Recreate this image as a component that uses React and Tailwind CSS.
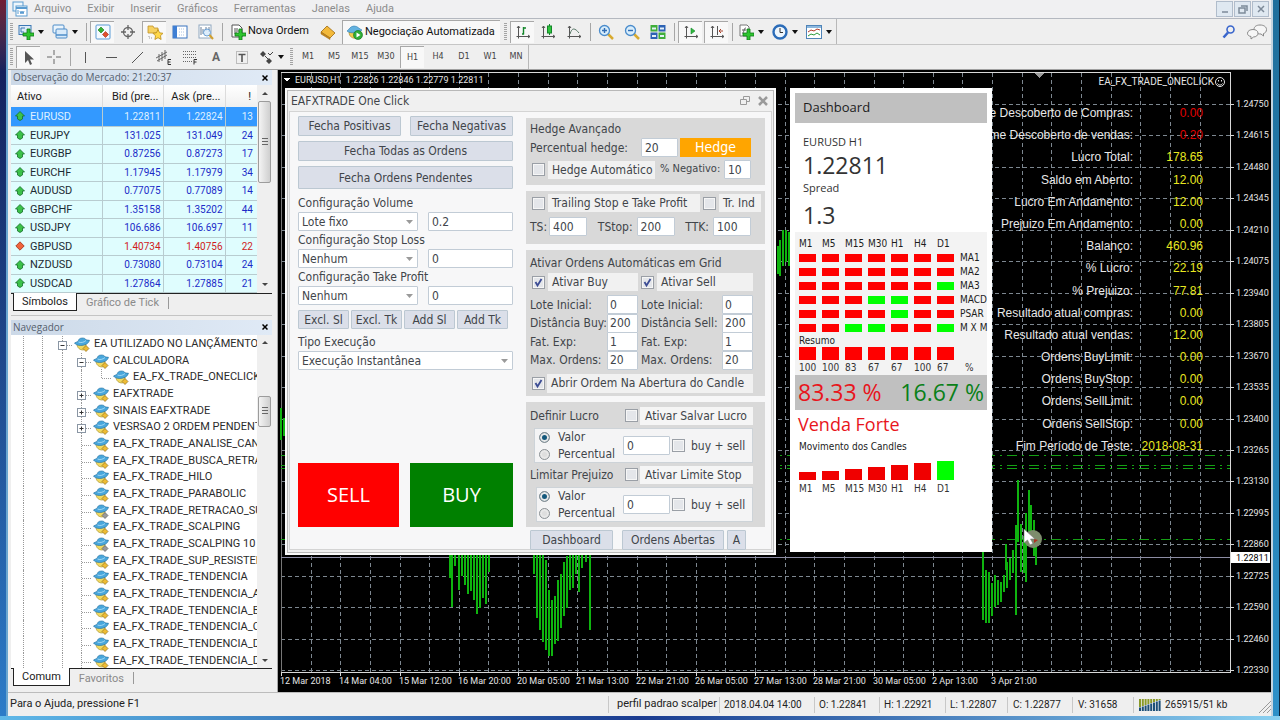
import React from 'react';
import clsx from 'clsx';

const menus = ['Arquivo', 'Exibir', 'Inserir', 'Gráficos', 'Ferramentas', 'Janelas', 'Ajuda'];
const timeframes = ['M1', 'M5', 'M15', 'M30', 'H1', 'H4', 'D1', 'W1', 'MN'];

const quotes = [
  { symbol: 'EURUSD', bid: '1.22811', ask: '1.22824', spread: 13, up: true },
  { symbol: 'EURJPY', bid: '131.025', ask: '131.049', spread: 24, up: true },
  { symbol: 'EURGBP', bid: '0.87256', ask: '0.87273', spread: 17, up: true },
  { symbol: 'EURCHF', bid: '1.17945', ask: '1.17979', spread: 34, up: true },
  { symbol: 'AUDUSD', bid: '0.77075', ask: '0.77089', spread: 14, up: true },
  { symbol: 'GBPCHF', bid: '1.35158', ask: '1.35202', spread: 44, up: true },
  { symbol: 'USDJPY', bid: '106.686', ask: '106.697', spread: 11, up: true },
  { symbol: 'GBPUSD', bid: '1.40734', ask: '1.40756', spread: 22, up: false },
  { symbol: 'NZDUSD', bid: '0.73080', ask: '0.73104', spread: 24, up: true },
  { symbol: 'USDCAD', bid: '1.27864', ask: '1.27885', spread: 21, up: true },
];

const tree = [
  { name: 'EA UTILIZADO NO LANÇÃMENTO', depth: 2, box: '-' },
  { name: 'CALCULADORA', depth: 3, box: '-' },
  { name: 'EA_FX_TRADE_ONECLICK', depth: 4 },
  { name: 'EAFXTRADE', depth: 3, box: '+' },
  { name: 'SINAIS EAFXTRADE', depth: 3, box: '+' },
  { name: 'VESRSAO 2 ORDEM PENDENT', depth: 3, box: '+' },
  { name: 'EA_FX_TRADE_ANALISE_CAN', depth: 3 },
  { name: 'EA_FX_TRADE_BUSCA_RETRA', depth: 3 },
  { name: 'EA_FX_TRADE_HILO', depth: 3 },
  { name: 'EA_FX_TRADE_PARABOLIC', depth: 3 },
  { name: 'EA_FX_TRADE_RETRACAO_SU', depth: 3, gray: true },
  { name: 'EA_FX_TRADE_SCALPING', depth: 3 },
  { name: 'EA_FX_TRADE_SCALPING 10 1', depth: 3, gray: true },
  { name: 'EA_FX_TRADE_SUP_RESISTEN', depth: 3 },
  { name: 'EA_FX_TRADE_TENDENCIA', depth: 3 },
  { name: 'EA_FX_TRADE_TENDENCIA_A', depth: 3 },
  { name: 'EA_FX_TRADE_TENDENCIA_B', depth: 3 },
  { name: 'EA_FX_TRADE_TENDENCIA_C', depth: 3 },
  { name: 'EA_FX_TRADE_TENDENCIA_D', depth: 3 },
  { name: 'EA_FX_TRADE_TENDENCIA_D', depth: 3 },
];

const stats = [
  ['Volume Descoberto de Compras:', '0.00', 'red'],
  ['Volume Descoberto de vendas:', '0.20', 'red'],
  ['Lucro Total:', '178.65'],
  ['Saldo em Aberto:', '12.00'],
  ['Lucro Em Andamento:', '12.00'],
  ['Prejuizo Em Andamento:', '0.00'],
  ['Balanço:', '460.96'],
  ['% Lucro:', '22.19'],
  ['% Prejuizo:', '77.81'],
  ['Resultado atual compras:', '0.00'],
  ['Resultado atual vendas:', '12.00'],
  ['Ordens BuyLimit:', '0.00'],
  ['Ordens BuyStop:', '0.00'],
  ['Ordens SellLimit:', '0.00'],
  ['Ordens SellStop:', '0.00'],
  ['Fim Período de Teste:', '2018-08-31'],
];

const prices = ['1.24750', '1.24615', '1.24480', '1.24345', '1.24210', '1.24075', '1.23940', '1.23805', '1.23670', '1.23535', '1.23400', '1.23265', '1.23130', '1.22995', '1.22860', '1.22725', '1.22590', '1.22460', '1.22330'];
const dates = ['12 Mar 2018', '14 Mar 04:00', '15 Mar 12:00', '16 Mar 20:00', '20 Mar 05:00', '21 Mar 13:00', '22 Mar 21:00', '26 Mar 05:00', '27 Mar 13:00', '28 Mar 21:00', '30 Mar 05:00', '2 Apr 13:00', '3 Apr 21:00'];

// [x, high, low]
const bars = [
  [281, 408, 440], [284, 418, 436],
  [450, 540, 578], [452, 540, 607], [455, 540, 566], [459, 540, 590], [462, 540, 576], [465, 540, 585], [468, 540, 594], [471, 540, 591], [474, 545, 600], [477, 548, 614], [480, 550, 608], [483, 545, 598], [486, 545, 604], [489, 545, 572],
  [534, 540, 574], [537, 540, 618], [540, 540, 630], [543, 550, 642], [546, 560, 650], [549, 590, 656], [552, 600, 656], [555, 596, 644], [558, 580, 641], [561, 574, 628], [564, 562, 616], [567, 556, 608], [570, 550, 590], [573, 550, 588], [576, 550, 574], [579, 550, 592], [582, 540, 568], [586, 540, 562], [590, 540, 630],
  [778, 246, 274], [780, 240, 276], [783, 230, 266], [786, 230, 262], [789, 232, 266],
  [983, 540, 620], [986, 570, 623], [989, 572, 623], [992, 583, 616], [995, 575, 607], [998, 580, 605], [1001, 582, 602], [1004, 575, 592], [1007, 562, 588], [1010, 558, 580], [1013, 550, 573], [1016, 554, 578],
  [1018, 480, 542], [1021, 524, 572], [1024, 536, 573], [1026, 513, 582], [1029, 490, 540], [1031, 505, 534], [1034, 520, 556], [1036, 545, 565],
  [1016, 525, 615], [1006, 544, 570],
];

const signals = [
  ['MA1', 'rrrrrrr'],
  ['MA2', 'rrrrrrr'],
  ['MA3', 'rrrrrrg'],
  ['MACD', 'rrrggrr'],
  ['PSAR', 'rrrrgrr'],
  ['M X M', 'rrggrrg'],
];
const dashFrames = ['M1', 'M5', 'M15', 'M30', 'H1', 'H4', 'D1'];
const summary = [100, 100, 83, 67, 67, 100, 67];
const movement = [8, 9, 11, 13, 15, 17, 19];

/* ---------- icons ---------- */

function Icon({ children, className }) {
  return <svg viewBox="0 0 16 16" className={clsx('w-4 h-4 shrink-0', className)} fill="none">{children}</svg>;
}

const Plus = () => <path d="M9 5h3v4h4v3h-4v4h-3v-4h-4v-3h4z" fill="#2fc52f" stroke="#0d7a17" strokeWidth=".8" />;

const AppIcon = () => (
  <Icon>
    <rect x="1" y="1" width="10" height="9" fill="#eef6fc" stroke="#5a9bd0" />
    <rect x="4" y="5" width="11" height="10" fill="#fff" stroke="#5a9bd0" />
    <path d="M4 7h11" stroke="#5a9bd0" strokeWidth="2" />
    <path d="M6 9v4m2-3 1 3 1-3 1 3 1-3" stroke="#5a9bd0" />
  </Icon>
);
const NewChartIcon = () => (
  <Icon>
    <rect x="1" y="1.5" width="12" height="9" fill="#dcebf8" stroke="#3c78b4" />
    <path d="M3 4h4M3 8h3M3 4v4" stroke="#3c78b4" />
    <Plus />
  </Icon>
);
const ProfilesIcon = () => (
  <Icon>
    <rect x="1" y="1" width="11" height="8" rx="1" fill="#eaf4fc" stroke="#4d8cc8" />
    <rect x="4" y="5" width="11" height="9" rx="1" fill="#d8eafa" stroke="#4d8cc8" />
    <path d="M4 11h11" stroke="#4d8cc8" strokeWidth="1.5" />
  </Icon>
);
const WatchIcon = () => (
  <Icon>
    <rect x="1" y="1" width="14" height="14" rx="1" fill="#f4faff" stroke="#5b9bd5" />
    <path d="M6 3l3 3-3 3-3-3z" fill="#35b135" stroke="#157a15" strokeWidth=".6" />
    <path d="M10.500 7.500l3 3-3 3-3-3z" fill="#e0502c" stroke="#a02a12" strokeWidth=".6" />
  </Icon>
);
const CrosshairIcon = () => (
  <Icon>
    <circle cx="8" cy="8" r="4.5" stroke="#666" strokeWidth="1.3" />
    <path d="M8 1v5M8 10v5M1 8h5M10 8h5" stroke="#666" strokeWidth="1.3" />
  </Icon>
);
const NavigatorIcon = () => (
  <Icon>
    <path d="M1 2h5l1 2h4v5H1z" fill="#f6d160" stroke="#c0922a" strokeWidth=".8" />
    <path d="M2 12v2h3" stroke="#999" strokeDasharray="1 1" />
    <path d="M11 5.500l1.600 3.300 3.400.500-2.500 2.500.6 3.700-3.100-1.800-3.100 1.800.6-3.700L6 9.300l3.400-.5z" fill="#ffd84a" stroke="#b98a1a" strokeWidth=".8" />
  </Icon>
);
const TerminalIcon = () => (
  <Icon>
    <rect x="1" y="2" width="14" height="12" fill="#fff" stroke="#3a74c0" />
    <rect x="1" y="2" width="4" height="12" fill="#3f7fd4" />
    <path d="M7 5h6M7 8h6M7 11h6" stroke="#a9c3e4" strokeDasharray="1 1" />
  </Icon>
);
const TesterIcon = () => (
  <Icon>
    <rect x="1" y="1" width="12" height="13" fill="#fff" stroke="#90a8c0" />
    <path d="M3 3v8M5 5v5M8 3v4M11 3v5" stroke="#6a7f96" />
    <circle cx="9" cy="8.500" r="3.500" fill="#d4e9fa" fillOpacity=".8" stroke="#6aa0d4" />
    <path d="M11.500 11l3.500 4" stroke="#d0a030" strokeWidth="2" />
  </Icon>
);
const NewOrderIcon = () => (
  <Icon>
    <path d="M2 1h7l3 3v9H2z" fill="#fff" stroke="#555" />
    <path d="M4 5h4M4 7h5M4 9h3" stroke="#555" />
    <Plus />
  </Icon>
);
const GoldIcon = () => (
  <Icon>
    <path d="M1 8l6-6 8 7-5 5z" fill="#f3b93a" stroke="#9c6a12" strokeWidth=".8" />
    <path d="M1 8l9 6v1.500L1 10z" fill="#c98716" stroke="#9c6a12" strokeWidth=".5" />
  </Icon>
);
const AutoTradeIcon = () => (
  <Icon>
    <path d="M2 8c0 5 4 7 8 6l3-6z" fill="#f0cc4c" stroke="#a58420" strokeWidth=".6" />
    <path d="M0 7c2-1 3-5 7-5s5 3 8 4c-3 3-12 4-15 1z" fill="#63b2e0" stroke="#2e7cae" strokeWidth=".6" />
    <circle cx="11" cy="11" r="4.500" fill="#2fae35" stroke="#0f7018" strokeWidth=".6" />
    <path d="M9.500 8.500v5l4-2.500z" fill="#fff" />
  </Icon>
);
const Axes = () => <path d="M3.500 2v12.500M1.500 12.500H15M2 4l1.500-2L5 4M13 11l2 1.500-2 1.500" stroke="#555" />;
const BarsIcon = () => <Icon><Axes /><path d="M7 10h2M8.500 3v7.500M8 4h3" stroke="#13862a" strokeWidth="1.400" /></Icon>;
const CandleIcon = () => <Icon><Axes /><path d="M9.500 0v11" stroke="#13862a" /><rect x="7.500" y="2" width="4" height="7" fill="#2fc43c" stroke="#13862a" /></Icon>;
const LineIcon = () => <Icon><Axes /><path d="M4 10c2-7 5-6 9-1" stroke="#5c7a6a" /></Icon>;
const ZoomIcon = ({ plus }) => (
  <Icon>
    <path d="M10 10l5 5" stroke="#d8aa30" strokeWidth="2.500" />
    <circle cx="6.500" cy="6.500" r="5" fill="#d8edfb" stroke="#4a8ccc" strokeWidth="1.300" />
    <path d={plus ? 'M4 6.500h5M6.500 4v5' : 'M4 6.500h5'} stroke="#2f6cb4" strokeWidth="1.400" />
  </Icon>
);
const TileIcon = () => (
  <Icon>
    <rect x=".5" y="1" width="7" height="6.500" fill="#3fae3a" />
    <rect x="8.500" y="1" width="7" height="6.500" fill="#2c62b4" />
    <rect x=".5" y="8.500" width="7" height="6.500" fill="#2c62b4" />
    <rect x="8.500" y="8.500" width="7" height="6.500" fill="#3fae3a" />
    <path d="M2 4.500h4M10 4.500h4M2 12h4M10 12h4" stroke="#e4f0f8" strokeWidth="2" />
  </Icon>
);
const ScrollIcon = () => <Icon><Axes /><path d="M8 4v6l4-3z" fill="#2fb83c" stroke="#13862a" strokeWidth=".6" /></Icon>;
const ShiftIcon = () => <Icon><Axes /><path d="M8.500 2v9" stroke="#555" /><path d="M14 7h-4m2-2-2 2 2 2" stroke="#a8402a" /></Icon>;
const IndicatorsIcon = () => (
  <Icon>
    <path d="M2 1h7l2 2v9H2z" fill="#fff" stroke="#777" />
    <path d="M4 9c2 1 2-6 4-5M4 6h4" stroke="#555" />
    <Plus />
  </Icon>
);
const ClockIcon = () => (
  <Icon>
    <circle cx="8" cy="8" r="6.500" fill="#eef6fd" stroke="#2b6cb8" strokeWidth="2.400" />
    <path d="M8 4v4.500h3" stroke="#333" />
  </Icon>
);
const TemplateIcon = () => (
  <Icon>
    <rect x=".5" y="1.500" width="15" height="13" fill="#fff" stroke="#4f84b8" />
    <path d="M1 3h14" stroke="#8db8de" strokeWidth="2" />
    <path d="M2 8l3-2 3 1 3-2 3 1" stroke="#b03a2a" />
    <path d="M2 12l3-2 3 1 3-2 3 2" stroke="#2a9a3a" />
  </Icon>
);
const SearchIcon = () => (
  <Icon>
    <circle cx="9.500" cy="5.500" r="3.500" stroke="#3a66cc" strokeWidth="1.600" />
    <path d="M7 8.500L2.500 13.500" stroke="#3a66cc" strokeWidth="2.600" />
  </Icon>
);
const ChatIcon = () => (
  <svg viewBox="0 0 20 16" className="w-5 h-4" fill="#f6f6f6" stroke="#888">
    <path d="M13 1c4 0 6.500 2 6.500 4.500S18 9 16.500 9.500V12L14 10c-4 0-7-1.500-7-4.500S9.500 1 13 1z" />
    <path d="M6 5.500c3 0 5 1.500 5 3.700S9 13 6.500 13L4 15v-2.500C1.500 12 .5 11 .5 9.200c0-2.200 2.500-3.700 5.500-3.700z" />
  </svg>
);

const CursorIcon = () => <Icon><path d="M4 1v12l3-3 2 5 2-1-2-4.500h4z" fill="#555" /></Icon>;
const CrossIcon = () => <Icon><path d="M8 1v5M8 10v5M1 8h5M10 8h5" stroke="#666" /></Icon>;
const VLineIcon = () => <Icon><path d="M7.500 3v11" stroke="#555" /></Icon>;
const HLineIcon = () => <Icon><path d="M2 8.500h11" stroke="#555" /></Icon>;
const TrendIcon = () => <Icon><path d="M2 14L13 3" stroke="#555" /></Icon>;
const ChannelIcon = () => (
  <Icon>
    <path d="M0 9L11 3M1 12l10-6M3 5v8M6 3v9M9 1v9" stroke="#666" />
    <path d="M15 10.500h-3v5h3M12 13h2.500" stroke="#333" />
  </Icon>
);
const FiboIcon = () => (
  <Icon>
    <path d="M1 2.500h13M1 5.500h13M1 8.500h13M1 12.500h9" stroke="#666" strokeDasharray="1 1" />
    <path d="M15 10.500h-3v5M12 13h2.500" stroke="#333" />
  </Icon>
);
const LabelIcon = () => (
  <Icon>
    <rect x="2.500" y="2.500" width="11" height="12" stroke="#888" strokeDasharray="1 1" />
    <path d="M4.500 5.500h7M8 5v8" stroke="#555" strokeWidth="1.600" />
  </Icon>
);
const ArrowsIcon = () => (
  <Icon>
    <path d="M5 2l3 3-3 3-3-3z M11 9l3 3-3 3-3-3z" fill="#444" />
    <path d="M7 7l3 3M10 4l2 2 3-3" stroke="#444" />
  </Icon>
);

function QuoteArrow({ up }) {
  return up ? (
    <svg viewBox="0 0 10 10" className="w-[10px] h-[10px] shrink-0"><path d="M5 .5L9.500 5H7.500v3L5 9.500 2.500 8V5H.5z" fill="#3cc24a" stroke="#14702a" strokeWidth=".8" /></svg>
  ) : (
    <svg viewBox="0 0 10 10" className="w-[10px] h-[10px] shrink-0"><path d="M5 .8L9.200 5 5 9.200.8 5z" fill="#f0643c" stroke="#9c2c14" strokeWidth=".8" /></svg>
  );
}

function ExpertIcon({ gray }) {
  return (
    <svg viewBox="0 0 16 15" className="w-4 h-[15px] shrink-0">
      <path d="M3 7c0 4 3 6 6 6 2 0 3-3 3-6z" fill="#f0d860" stroke="#a08c28" strokeWidth=".6" />
      <path d="M.5 6c1-.8 2.500-1 3.500-1.500C4.500 2 6 1 8.500 1c2 0 3 .8 3.500 1.800 1.200.4 2.500.2 3.500.5-1 3.700-5 5.200-9 5.200C3.500 8.500 1.500 7.500.5 6z" fill="#49a7dc" stroke="#1f6c9c" strokeWidth=".6" />
      <path d="M4.500 5c2 1 5.500.5 7.500-1.500" stroke="#b8e2f8" strokeWidth=".8" fill="none" />
      <path d="M12 8.500l3 3-3 3-3-3z" fill={gray ? '#9a9a9a' : '#eebc34'} stroke={gray ? '#5c5c5c' : '#94701a'} strokeWidth=".7" />
    </svg>
  );
}

/* ---------- toolbar pieces ---------- */

function Caret() {
  return <svg viewBox="0 0 6 4" className="w-[6px] h-1 shrink-0"><path d="M0 0h6L3 4z" fill="#111" /></svg>;
}

function ToolButton({ label, pressed, children }) {
  return (
    <button
      aria-label={label}
      className={clsx('w-6 h-[22px] shrink-0 flex items-center justify-center', pressed && 'bg-[#f8f8f8] border-t border-l border-[#a8a8a8]')}
    >
      {children}
    </button>
  );
}

function ToolMenu({ label, className, children }) {
  return (
    <button aria-label={label} className={clsx('h-[22px] shrink-0 flex items-center gap-1 pl-[2px]', className)}>
      {children}
      <Caret />
    </button>
  );
}

const Handle = () => (
  <div className="w-[6px] flex justify-center shrink-0"><div className="w-[3px] h-[18px] bg-[repeating-linear-gradient(to_bottom,#a4a4a4_0_1px,#efefef_1px_2px)]" /></div>
);
const Separator = () => (
  <div className="w-1 flex justify-center shrink-0"><div className="w-px h-[18px] bg-[#a6a6a6]" /></div>
);

function TopBars() {
  return (
    <header className="shrink-0 bg-[#efefef] text-[11px] text-[#111]">
      <nav className="flex items-center h-[19px] pl-1 border-b border-[#b4b8c0] bg-[#f0f0f2]">
        <AppIcon />
        <ul className="flex gap-4 pl-[6px] text-[#8c8c8c]">
          {menus.map((m) => <li key={m}><a href="#">{m}</a></li>)}
        </ul>
        <div className="ml-auto flex gap-px pr-[2px]">
          {['M4 10h6', 'M5 4h6v5M3 6h6v5H3z', 'M4 4l6 6M10 4l-6 6'].map((d, i) => (
            <button key={d} aria-label={['Minimizar', 'Restaurar', 'Fechar'][i]} className="w-[17px] h-4 border border-[#b0bccb] bg-[#dfe8f1] flex items-center justify-center">
              <svg viewBox="0 0 14 14" className="w-[14px] h-[14px]" fill="none" stroke="#7d8a99" strokeWidth="1.500"><path d={d} /></svg>
            </button>
          ))}
        </div>
      </nav>

      <div className="flex items-center h-[26px] border-b border-[#c6c6c6]">
        <div className="flex items-center gap-[2px] h-full border-r border-[#b8b8b8]">
          <Handle />
          <ToolMenu label="Novo gráfico" className="w-8"><NewChartIcon /></ToolMenu>
          <ToolMenu label="Perfis" className="w-8"><ProfilesIcon /></ToolMenu>
          <Separator />
          <ToolButton label="Observação do mercado" pressed><WatchIcon /></ToolButton>
          <ToolButton label="Janela de dados"><CrosshairIcon /></ToolButton>
          <ToolButton label="Navegador" pressed><NavigatorIcon /></ToolButton>
          <ToolButton label="Terminal"><TerminalIcon /></ToolButton>
          <ToolButton label="Testador"><TesterIcon /></ToolButton>
          <Separator />
          <button className="w-[88px] h-[22px] shrink-0 flex items-center gap-[2px] px-1 whitespace-nowrap"><NewOrderIcon />Nova Ordem</button>
          <ToolButton label="MetaEditor"><GoldIcon /></ToolButton>
          <button className="w-[158px] h-[24px] shrink-0 flex items-center gap-[2px] px-1 whitespace-nowrap bg-[#f8f8f8] border-t border-l border-[#a8a8a8]"><AutoTradeIcon />Negociação Automatizada</button>
          <Handle />
          <ToolButton label="Barras" pressed><BarsIcon /></ToolButton>
          <ToolButton label="Candles"><CandleIcon /></ToolButton>
          <ToolButton label="Linha"><LineIcon /></ToolButton>
          <Separator />
          <ToolButton label="Ampliar"><ZoomIcon plus /></ToolButton>
          <ToolButton label="Reduzir"><ZoomIcon /></ToolButton>
          <ToolButton label="Lado a lado"><TileIcon /></ToolButton>
          <Separator />
          <ToolButton label="Rolagem" pressed><ScrollIcon /></ToolButton>
          <ToolButton label="Deslocar" pressed><ShiftIcon /></ToolButton>
          <Separator />
          <ToolMenu label="Indicadores" className="w-8"><IndicatorsIcon /></ToolMenu>
          <ToolMenu label="Períodos" className="w-8"><ClockIcon /></ToolMenu>
          <ToolMenu label="Modelos" className="w-8"><TemplateIcon /></ToolMenu>
        </div>
        <div className="ml-auto flex items-center gap-[10px] pr-1">
          <button aria-label="Pesquisar"><SearchIcon /></button>
          <button aria-label="Mensagens"><ChatIcon /></button>
        </div>
      </div>

      <div className="flex items-center h-[25px] border-b border-[#a0a0a0]">
        <div className="flex items-center gap-[2px] h-full border-r border-[#b8b8b8]">
          <Handle />
          <ToolButton label="Cursor" pressed><CursorIcon /></ToolButton>
          <ToolButton label="Mira"><CrossIcon /></ToolButton>
          <Separator />
          <ToolButton label="Linha vertical"><VLineIcon /></ToolButton>
          <ToolButton label="Linha horizontal"><HLineIcon /></ToolButton>
          <ToolButton label="Linha de tendência"><TrendIcon /></ToolButton>
          <ToolButton label="Canal"><ChannelIcon /></ToolButton>
          <ToolButton label="Fibonacci"><FiboIcon /></ToolButton>
          <ToolButton label="Texto"><span className="text-[12px] font-bold text-[#666]">A</span></ToolButton>
          <ToolButton label="Rótulo"><LabelIcon /></ToolButton>
          <ToolMenu label="Setas" className="w-[30px]"><ArrowsIcon /></ToolMenu>
          <Handle />
          {timeframes.map((t) => (
            <ToolButton key={t} label={t} pressed={t === 'H1'}><span className="text-[9px] text-[#444] font-['DejaVu_Sans_Condensed','DejaVu_Sans',sans-serif]">{t}</span></ToolButton>
          ))}
        </div>
      </div>
    </header>
  );
}

/* ---------- left side ---------- */

function PanelTitle({ children }) {
  return (
    <div className="flex items-center justify-between h-[15px] shrink-0 px-[2px] bg-linear-to-r from-[#ccd9e8] to-[#e0eaf6] text-[10px] leading-[15px] text-[#55606e] font-['Open_Sans',sans-serif]">
      <h2>{children}</h2>
      <button aria-label="Fechar painel" className="w-[11px] h-[11px] flex items-center justify-center">
        <svg viewBox="0 0 6 6" className="w-[6px] h-[6px]" stroke="#000" strokeWidth="1.500"><path d="M.5.5l5 5M5.500.5l-5 5" /></svg>
      </button>
    </div>
  );
}

function ScrollBar({ thumb }) {
  return (
    <div className="w-[15px] shrink-0 bg-[#efefef] flex flex-col items-center">
      <div className="h-4 flex items-center shrink-0"><svg viewBox="0 0 6 3" className="w-[6px] h-[3px]"><path d="M0 3h6L3 0z" fill="#444" /></svg></div>
      <div className="flex-1 w-full flex flex-col items-center">
        <div className={clsx('w-[13px] rounded-[2px] border border-[#9c9c9c] bg-linear-to-r from-[#f4f4f4] to-[#cfcfcf] flex flex-col items-center justify-center gap-px', thumb)}>
          {[0, 1, 2].map((i) => <div key={i} className="w-[6px] h-px bg-[#666] mb-px" />)}
        </div>
      </div>
      <div className="h-4 flex items-center shrink-0"><svg viewBox="0 0 6 3" className="w-[6px] h-[3px]"><path d="M0 0h6L3 3z" fill="#444" /></svg></div>
    </div>
  );
}

function Tabs({ active, other }) {
  return (
    <div className="flex h-[19px] shrink-0 border-t border-[#222] pl-[2px] text-[11px] leading-[17px]">
      <button className="px-2 h-[18px] -mt-px bg-white border border-t-0 border-[#222]">{active}</button>
      <button className="px-[9px] h-[18px] text-[#8a8a8a]">{other}</button>
      <span className="w-px h-[12px] mt-[3px] bg-[#999]" />
    </div>
  );
}

function MarketWatch() {
  return (
    <section className="flex flex-col shrink-0 border-b border-[#c4c4c4] pb-[3px]">
      <PanelTitle>Observação do Mercado: 21:20:37</PanelTitle>
      <div className="flex">
        <table className="flex-1 table-fixed border-collapse bg-white text-[11px] leading-[17px] text-right">
          <thead>
            <tr className="h-[22px] bg-linear-to-b from-white to-[#f0f0f0]">
              <th className="w-[91px] font-normal text-left pl-[6px] border-r border-[#dcdcdc]">Ativo</th>
              <th className="w-[61px] font-normal pr-1 border-r border-[#dcdcdc]">Bid (pre...</th>
              <th className="w-[62px] font-normal pr-1 border-r border-[#dcdcdc]">Ask (pre...</th>
              <th className="w-[32px] font-normal pr-[6px]">!</th>
            </tr>
          </thead>
          <tbody>
            {quotes.map((q, i) => (
              <tr
                key={q.symbol}
                className={clsx(
                  'odd:h-[19px] even:h-[18px]',
                  i === 0 ? 'bg-[#3399ff] text-[#dff0ff]' : 'bg-[#dffdfe]',
                  i > 0 && (q.up ? 'text-[#1b2bc8]' : 'text-[#d01c1c]')
                )}
              >
                <td className="p-0 border-r border-b border-[#b8ccd0]">
                  <span className={clsx('flex items-center gap-[5px] pl-1', i > 0 && 'text-[#1c2b33]')}><QuoteArrow up={q.up} />{q.symbol}</span>
                </td>
                <td className="p-0 pr-[2px] text-[10px] border-r border-b border-[#b8ccd0]">{q.bid}</td>
                <td className="p-0 pr-[2px] text-[10px] border-r border-b border-[#b8ccd0]">{q.ask}</td>
                <td className="p-0 pr-1 text-[10px] border-b border-[#b8ccd0]">{q.spread}</td>
              </tr>
            ))}
          </tbody>
        </table>
        <ScrollBar thumb="h-[82px]" />
      </div>
      <Tabs active="Símbolos" other="Gráfico de Tick" />
    </section>
  );
}

function TreeRow({ item }) {
  const guides = [...Array(item.depth)];
  return (
    <li className="flex items-center h-[17px] nth-[3n]:h-4 shrink-0 whitespace-nowrap">
      {guides.map((_, i) => (
        <span key={i} className="odd:w-5 even:w-[19px] self-stretch flex justify-center shrink-0"><span className="border-l border-dotted border-[#999]" /></span>
      ))}
      <span className="odd:w-5 even:w-[19px] self-stretch flex items-center justify-end shrink-0">
        {item.box ? (
          <svg viewBox="0 0 14 17" className="w-[14px] h-[17px]" fill="none">
            <path d="M4.500 0v17M9 9.500h5" stroke="#999" strokeDasharray="1 1" />
            <rect x=".5" y="5.500" width="8" height="8" fill="#fff" stroke="#8a96a4" />
            <path d={item.box === '+' ? 'M2.500 9.500h4M4.500 7.500v4' : 'M2.500 9.500h4'} stroke="#333" />
          </svg>
        ) : (
          <svg viewBox="0 0 14 17" className="w-[14px] h-[17px]" fill="none">
            <path d={item.depth === 4 ? 'M4.500 0v9.500H14' : 'M4.500 0v17M5 9.500h9'} stroke="#999" strokeDasharray="1 1" />
          </svg>
        )}
      </span>
      <span className="flex items-center gap-1 pl-[2px]"><ExpertIcon gray={item.gray} />{item.name}</span>
    </li>
  );
}

function Navigator() {
  return (
    <section className="flex flex-col flex-1 min-h-0 pt-1">
      <PanelTitle>Navegador</PanelTitle>
      <div className="flex flex-1 min-h-0 bg-white">
        <ul className="flex-1 min-w-0 overflow-hidden flex flex-col pt-px pl-[2px] text-[11px] text-[#2b2b2b]">
          {tree.map((item, i) => <TreeRow key={i} item={item} />)}
        </ul>
        <ScrollBar thumb="h-[31px] mt-[45px]" />
      </div>
      <Tabs active="Comum" other="Favoritos" />
    </section>
  );
}

/* ---------- chart ---------- */

function Chart() {
  const cols = [...Array(32)].map((_, i) => 281 + 29.63 * i);
  const rowY = (i) => 104 + 31.45 * i;
  return (
    <svg className="absolute inset-0 w-full h-full" fontSize="9" fill="#e6e6e6" shapeRendering="crispEdges">
      {/* coordinates are those of the whole window, shifted to the pane's corner */}
      <g transform="translate(-278 -70)">
        <g stroke="#7d8790" strokeDasharray="4 3">
          {cols.map((x) => <path key={x} d={`M${Math.round(x) + 0.5} 73V672`} />)}
          {prices.map((p, i) => <path key={p} d={`M281 ${Math.round(rowY(i)) + 0.5}H1230`} />)}
        </g>
        <path d="M281 72.500H1230.500M281 672.500H1230.500V73" stroke="#d8d8d8" fill="none" />
        <path d="M281.500 73V672" stroke="#777" />
        <g stroke="#14a014" strokeDasharray="10 5 2 5">
          <path d="M281 455.500H1230M281 465.500H1230M281 468.500H1230M281 539.500H1230" />
        </g>
        <path d="M281 557.500H1230" stroke="#8c8ca4" />
        <g stroke="#0fb40f" strokeWidth="2">
          {bars.map(([x, hi, lo]) => <path key={`${x}-${hi}`} d={`M${x} ${hi}V${lo}`} />)}
        </g>
        {prices.map((p, i) => (
          <g key={p}>
            <path d={`M1230 ${Math.round(rowY(i)) + 0.5}h4`} stroke="#d8d8d8" />
            <text x="1236" y={Math.round(rowY(i)) + 3}>{p}</text>
          </g>
        ))}
        <rect x="1231" y="552" width="39" height="11" fill="#fff" />
        <text x="1236" y="561" fill="#000">1.22811</text>
        {dates.map((d, i) => (
          <g key={d}>
            <path d={`M${Math.round(281 + 59.26 * i) + 0.5} 672v4`} stroke="#d8d8d8" />
            <text x={Math.round(280 + 59.26 * i)} y="684">{d}</text>
          </g>
        ))}
        <path d="M1034 73h10l-5 5z" fill="#9a9a9a" />
        <path d="M283.500 78h7l-3.500 4z" fill="#fff" />
        <text x="295" y="83" xmlSpace="preserve">EURUSD,H1  1.22826 1.22846 1.22779 1.22811</text>
        <text x="1214" y="85" fontSize="10" textAnchor="end">EA_FX_TRADE_ONECLICK</text>
        <g fill="none" stroke="#e6e6e6" shapeRendering="auto">
          <circle cx="1220" cy="82" r="4.500" />
          <path d="M1217.500 83.500c1 2 4 2 5 0M1218.500 80v1.500M1221.500 80v1.500" />
        </g>
      </g>
    </svg>
  );
}

function Stats() {
  return (
    <dl className="absolute top-[32px] right-[68px] h-[355px] grid auto-rows-fr text-[12px] leading-[22px] text-right whitespace-nowrap font-['Liberation_Sans',sans-serif]">
      {stats.map(([label, value, tone]) => (
        <div key={label} className="flex justify-end">
          <dt className="text-[#e8e8e8]">{label}</dt>
          <dd className={clsx('w-[70px]', tone === 'red' ? 'text-[#e00000]' : 'text-[#e8e820]')}>{value}</dd>
        </div>
      ))}
    </dl>
  );
}

/* ---------- expert window ---------- */

const btn = 'bg-[#dbdfe9] border border-[#bcc8d2] rounded-[1px] flex items-center justify-center whitespace-nowrap';
const field = 'bg-white border border-[#c2ccd6] rounded-[1px] h-[19px] px-[3px] min-w-0';

function Check({ id, checked, label, className }) {
  return (
    <>
      <span className="relative w-[13px] h-[13px] shrink-0">
        <input id={id} type="checkbox" defaultChecked={checked} className="peer block appearance-none w-[13px] h-[13px] border border-[#9a9fa6] bg-[#e4e6ea] shadow-[inset_0_0_0_1px_#f6f6f6]" />
        <svg viewBox="0 0 13 13" className="absolute inset-0 hidden peer-checked:block pointer-events-none" fill="none" stroke="#3c4c94" strokeWidth="1.800"><path d="M3.500 6l2 3.500L9.500 3" /></svg>
      </span>
      <label htmlFor={id} className={clsx('whitespace-nowrap', className)}>{label}</label>
    </>
  );
}

function Combo({ id, value, className }) {
  return (
    <span className={clsx('relative', className)}>
      <select id={id} defaultValue={value} className="appearance-none block w-full h-[19px] bg-white border border-[#c2ccd6] rounded-[1px] px-[3px]">
        <option>{value}</option>
      </select>
      <svg viewBox="0 0 7 4" className="absolute right-[5px] top-[8px] w-[7px] h-1 pointer-events-none"><path d="M0 0h7L3.500 4z" fill="#9a9a9a" /></svg>
    </span>
  );
}

function VolumeRow({ label, mode, value }) {
  return (
    <div className="h-[37px]">
      <label htmlFor={label} className="block h-[18px] leading-[18px]">{label}</label>
      <div className="flex gap-[10px]">
        <Combo id={label} value={mode} className="w-[120px]" />
        <input aria-label={`${label} valor`} defaultValue={value} className={clsx(field, 'flex-1')} />
      </div>
    </div>
  );
}

function GridField({ label, value, id, className }) {
  return (
    <div className={clsx('flex items-center justify-between whitespace-nowrap', className)}>
      <label htmlFor={id}>{label}</label>
      <input id={id} defaultValue={value} className="bg-white border border-[#c2ccd6] rounded-[1px] h-[19px] w-[31px] px-[2px]" />
    </div>
  );
}

function LimitBox({ name, title, toggle, className }) {
  return (
    <div>
      <div className="flex items-center h-[19px] pl-1 pr-3">
        <span className="w-[95px] whitespace-nowrap">{title}</span>
        <div className="flex flex-1 items-center gap-[2px]"><Check id={`${name}-on`} label={toggle} className="flex-1 bg-[#f5f5f5] h-[18px] leading-[18px] pl-[5px]" /></div>
      </div>
      <div className={clsx('flex items-center mr-3 mt-[3px] h-[35px] bg-[#f4f4f5] border border-[#cdd3d8]', className)}>
        <div className="flex flex-col w-[84px] leading-[17px]">
          {['Valor', 'Percentual'].map((o, i) => (
            <label key={o} className="flex items-center gap-2">
              <input type="radio" name={name} defaultChecked={i === 0} className="appearance-none w-[11px] h-[11px] rounded-full border border-[#8c9296] bg-[#dedede] checked:bg-[#14587c] shadow-[inset_0_0_0_2px_#e8e8e8]" />
              {o}
            </label>
          ))}
        </div>
        <input aria-label={title} defaultValue="0" className={clsx(field, 'w-[47px]')} />
        <div className="flex items-center gap-[6px] pl-[2px]"><Check id={`${name}-both`} label="buy + sell" /></div>
      </div>
    </div>
  );
}

function ExpertWindow() {
  return (
    <section className="absolute left-[7px] top-[18px] w-[491px] h-[467px] flex flex-col bg-[#f0f0f0] border-2 border-[#fafafa] outline outline-[#b8b8b8] -outline-offset-3 px-[2px] pb-[3px] text-[12px] text-[#41454a] font-['DejaVu_Sans_Condensed','DejaVu_Sans',sans-serif]">
      <div className="flex items-center justify-between h-[21px] shrink-0 pl-[2px] pr-1">
        <h1>EAFXTRADE One Click</h1>
        <div className="flex gap-2 text-[#9a9a9a]">
          <button aria-label="Restaurar"><svg viewBox="0 0 10 10" className="w-[10px] h-[10px]" fill="none" stroke="currentColor"><path d="M3.500 3.500v-3h6v5h-3M.5 3.500h6v5h-6z" /></svg></button>
          <button aria-label="Fechar"><svg viewBox="0 0 10 10" className="w-[10px] h-[10px]" fill="none" stroke="currentColor" strokeWidth="2.500"><path d="M1 1l8 8M9 1L1 9" /></svg></button>
        </div>
      </div>

      <div className="flex flex-1 min-h-0 border border-[#d4d4d4] bg-[#f7f7f8] pl-2 pr-[6px] pt-1 gap-[13px]">
        {/* Orders */}
        <div className="w-[215px] shrink-0 flex flex-col">
          <div className="flex justify-between">
            <button className={clsx(btn, 'w-[103px] h-5')}>Fecha Positivas</button>
            <button className={clsx(btn, 'w-[103px] h-5')}>Fecha Negativas</button>
          </div>
          <button className={clsx(btn, 'h-5 mt-[5px]')}>Fecha Todas as Ordens</button>
          <button className={clsx(btn, 'h-[23px] mt-[5px]')}>Fecha Ordens Pendentes</button>
          <div className="mt-[5px]">
            <VolumeRow label="Configuração Volume" mode="Lote fixo" value="0.2" />
            <VolumeRow label="Configuração Stop Loss" mode="Nenhum" value="0" />
            <VolumeRow label="Configuração Take Profit" mode="Nenhum" value="0" />
          </div>
          <div className="flex gap-[2px] mt-[5px]">
            {['Excl. Sl', 'Excl. Tk', 'Add Sl', 'Add Tk'].map((b) => <button key={b} className={clsx(btn, 'w-[51px] h-[19px]')}>{b}</button>)}
          </div>
          <label htmlFor="exec" className="mt-1 h-[18px] leading-[18px]">Tipo Execução</label>
          <Combo id="exec" value="Execução Instantânea" />
          <div className="flex justify-between mt-auto mb-[22px] text-[20px] text-white font-['Open_Sans',sans-serif]">
            <button className="w-[101px] h-[64px] bg-[#ff0000]">SELL</button>
            <button className="w-[103px] h-[64px] bg-[#008000]">BUY</button>
          </div>
        </div>

        {/* Automation */}
        <div className="flex-1 min-w-0 flex flex-col gap-[6px] pt-[2px]">
          <div className="bg-[#d9d9d9] pl-1 pr-[14px] pt-[2px] pb-[6px]">
            <h3 className="h-[18px] leading-[18px]">Hedge Avançado</h3>
            <div className="flex items-center h-[19px]">
              <label htmlFor="hedge" className="w-[111px]">Percentual hedge:</label>
              <input id="hedge" defaultValue="20" className={clsx(field, 'w-[37px]')} />
              <button className="ml-[2px] flex-1 h-[19px] leading-[19px] bg-[#ffa500] text-white text-[14px]">Hedge</button>
            </div>
            <div className="flex items-center mt-[3px] gap-[3px] pl-[2px]">
              <Check id="auto" label="Hedge Automático" className="bg-[#f1f1f1] h-[18px] leading-[18px] pl-1 w-[107px] shrink-0" />
              <label htmlFor="neg" className="whitespace-nowrap pl-[2px] text-[11px] flex-1">% Negativo:</label>
              <input id="neg" defaultValue="10" className={clsx(field, 'w-[27px]')} />
            </div>
          </div>

          <div className="bg-[#d9d9d9] pl-1 pr-[4px] pt-[3px] pb-2">
            <div className="flex items-center gap-[3px] pl-[2px]">
              <Check id="ts" label="Trailing Stop e Take Profit" className="bg-[#f1f1f1] h-[18px] leading-[18px] pl-1 flex-1 min-w-0" />
              <Check id="tr" label="Tr. Ind" className="bg-[#f1f1f1] h-[18px] leading-[18px] pl-1 w-[42px]" />
            </div>
            <div className="flex items-center justify-between mt-[5px] pr-[10px]">
              {[['TS:', 400, 'gap-[2px]'], ['TStop:', 200, 'gap-1'], ['TTK:', 100, 'gap-1']].map(([l, v, gap]) => (
                <div key={l} className={clsx('flex items-center', gap)}>
                  <label htmlFor={l}>{l}</label>
                  <input id={l} defaultValue={v} className={clsx(field, 'w-[38px]')} />
                </div>
              ))}
            </div>
          </div>

          <div className="bg-[#d9d9d9] pl-1 pr-3 pt-1 pb-[3px]">
            <h3 className="h-[19px] leading-[18px]">Ativar Ordens Automáticas em Grid</h3>
            <div className="flex items-center gap-[3px] pl-[2px] pb-1">
              <Check id="buy" checked label="Ativar Buy" className="bg-[#f1f1f1] h-[18px] leading-[18px] pl-1 w-[90px]" />
              <Check id="sell" checked label="Ativar Sell" className="bg-[#f1f1f1] h-[18px] leading-[18px] pl-1 flex-1" />
            </div>
            {[['Lote Inicial:', 'Lote Inicial:', 0], ['Distância Buy:', 'Distância Sell:', 200], ['Fat. Exp:', 'Fat. Exp:', 1], ['Max. Ordens:', 'Max. Ordens:', 20]].map(([a, b, v], i) => (
              <div key={a} className="flex gap-[3px] h-[19px] nth-[2n]:h-[18px]">
                <GridField id={`b${i}`} label={a} value={v} className="w-[108px]" />
                <GridField id={`s${i}`} label={b} value={v} className="flex-1" />
              </div>
            ))}
            <div className="flex items-center gap-[2px] pl-[2px] pt-[5px]">
              <Check id="open" checked label="Abrir Ordem Na Abertura do Candle" className="bg-[#f1f1f1] h-[19px] leading-[19px] pl-1 flex-1 min-w-0" />
            </div>
          </div>

          <div className="bg-[#d9d9d9] pt-1 pb-[5px] flex flex-col gap-[2px]">
            <LimitBox name="lucro" title="Definir Lucro" toggle="Ativar Salvar Lucro" className="ml-2 pl-1" />
            <LimitBox name="perda" title="Limitar Prejuizo" toggle="Ativar Limite Stop" className="ml-[10px] pl-[2px]" />
          </div>

          <div className="flex -mt-[3px] pl-1">
            <button className={clsx(btn, 'w-[83px] h-5')}>Dashboard</button>
            <button className={clsx(btn, 'w-[102px] h-5 ml-[9px]')}>Ordens Abertas</button>
            <button className={clsx(btn, 'w-[19px] h-5 ml-[3px]')}>A</button>
          </div>
        </div>
      </div>
    </section>
  );
}

/* ---------- dashboard window ---------- */

function DashboardWindow() {
  return (
    <section className="absolute left-[512px] top-[18px] w-[202px] h-[464px] bg-white p-[5px] text-[#1c1c1c] font-['Open_Sans',sans-serif]">
      <h2 className="h-[30px] leading-[28px] pl-2 bg-[#c0c0c0] text-[13px]">Dashboard</h2>
      <div className="pl-2 pt-[10px] h-[109px] text-[11px] text-[#333]">
        <p className="leading-[18px]">EURUSD H1</p>
        <p className="text-[23px] leading-[28px]">1.22811</p>
        <p className="leading-[18px]">Spread</p>
        <p className="text-[23px] leading-[36px]">1.3</p>
      </div>
      <div className="bg-[#f3f3f3] pl-1 pt-1 h-[143px] text-[10px] font-['DejaVu_Sans_Condensed','DejaVu_Sans',sans-serif]">
        <table className="table-fixed w-full border-collapse text-left">
          <thead>
            <tr className="h-[15px] leading-[14px]">
              {dashFrames.map((f) => <th key={f} className="w-[23px] p-0 font-normal">{f}</th>)}
              <td className="p-0" />
            </tr>
          </thead>
          <tbody>
            {signals.map(([name, cells]) => (
              <tr key={name} className="h-[14px] leading-[14px] whitespace-nowrap">
                {cells.split('').map((c, i) => (
                  <td key={i} className="p-0"><div className={clsx('w-[17px] h-2', c === 'r' ? 'bg-[#ff0000]' : 'bg-[#00ff00]')} /></td>
                ))}
                <th className="p-0 font-normal">{name}</th>
              </tr>
            ))}
          </tbody>
        </table>
        <p className="leading-[12px]">Resumo</p>
        <div className="flex">
          {summary.map((v, i) => (
            <div key={i} className="w-[23px]">
              <div className="w-[17px] h-[13px] bg-[#ff0000]" />
              <div className="leading-[15px] text-[#333]">{v}</div>
            </div>
          ))}
          <div className="self-end leading-[15px] pl-[5px] text-[#333]">%</div>
        </div>
      </div>
      <div className="flex justify-between items-center h-[35px] px-[3px] bg-[#c0c0c0] text-[23px]">
        <span className="text-[#e8151c]">83.33 %</span>
        <span className="text-[#0a8018]">16.67 %</span>
      </div>
      <p className="pl-[3px] text-[18px] leading-[28px] text-[#e8151c]">Venda Forte</p>
      <div className="pl-1 text-[10px] font-['DejaVu_Sans_Condensed','DejaVu_Sans',sans-serif]">
        <p className="leading-[18px]">Movimento dos Candles</p>
        <div className="flex items-end h-[40px]">
          {movement.map((h, i) => (
            <div key={i} className="w-[23px]">
              <div className={clsx('w-[17px]', i === 6 ? 'bg-[#00ff00]' : 'bg-[#f00000]')} style={{ height: h }} />
              <div className="leading-[14px] pt-[2px] text-[#333]">{dashFrames[i]}</div>
            </div>
          ))}
        </div>
      </div>
    </section>
  );
}

function StatusBar() {
  const volume = [4, 5, 6, 7, 8, 9, 10, 11];
  return (
    <footer className="h-6 shrink-0 flex items-center border-t border-[#bcbcbc] bg-[#efefef] text-[11px] text-[#222] whitespace-nowrap">
      <span className="flex-1 pl-[2px]">Para o Ajuda, pressione F1</span>
      <span className="w-[111px] pl-2 border-l border-[#c8c8c8]">perfil padrao scalper</span>
      <div className="flex items-center text-[10px] leading-[16px]">
        <span className="w-[95px] pl-1 border-l border-[#c8c8c8]">2018.04.04 14:00</span>
        <span className="w-[65px] pl-1 border-l border-[#c8c8c8]">O: 1.22841</span>
        <span className="w-[66px] pl-1 border-l border-[#c8c8c8]">H: 1.22921</span>
        <span className="w-[62px] pl-1 border-l border-[#c8c8c8]">L: 1.22807</span>
        <span className="w-[65px] pl-[5px] border-l border-[#c8c8c8]">C: 1.22877</span>
        <span className="w-[61px] pl-[5px] border-l border-[#c8c8c8]">V: 31658</span>
        <span className="w-[138px] pl-[5px] border-l border-[#c8c8c8] flex items-center gap-1">
          <svg viewBox="0 0 22 12" className="w-[22px] h-3">
            {volume.map((h, i) => (
              <g key={i}>
                <rect x={i * 2.8} y="0" width="2" height={12 - h} fill="#8a9a28" />
                <rect x={i * 2.8} y={12.5 - h} width="2" height={h} fill="#1c4f78" />
              </g>
            ))}
          </svg>
          <span className="flex-1">265915/51 kb</span>
          <svg viewBox="0 0 12 12" className="w-3 h-3 mt-1" stroke="#999"><path d="M0 12L12 0M4 12l8-8M8 12l4-4" /></svg>
        </span>
      </div>
    </footer>
  );
}

export default function App() {
  return (
    <div className="h-screen overflow-hidden flex flex-col bg-linear-to-b from-[#124a78] via-[#16185e] to-[#2f86d6] font-['Roboto',sans-serif]">
      <div className="flex-1 min-h-0 flex">
        <div className="w-2 shrink-0 border-r-2 border-[#6aa6d0] bg-linear-to-b from-[#701c34] via-[#14205e] via-10% to-[#2c7cc8]" />
        <main className="flex-1 min-w-0 flex flex-col bg-[#efefef]">
          <TopBars />
          <div className="flex-1 min-h-0 flex">
            <aside className="w-[270px] shrink-0 flex flex-col pl-[3px] pr-[5px] pb-[5px] border-r border-[#a8a8a8] text-[#1a1a1a]">
              <MarketWatch />
              <Navigator />
            </aside>
            <div className="relative flex-1 min-w-0 bg-black overflow-hidden">
              <Chart />
              <Stats />
              <ExpertWindow />
              <DashboardWindow />
              <svg viewBox="0 0 24 24" className="absolute left-[742px] top-[457px] w-6 h-6">
                <circle cx="13" cy="12" r="9" fill="#7d8c6c" />
                <path d="M14 12l4 1-4 3z" fill="#b03020" />
                <path d="M4 2v14l3.500-3 2.500 5 3-1.500-2.500-4.500H15z" fill="#fff" stroke="#777" strokeWidth=".6" />
              </svg>
            </div>
          </div>
          <StatusBar />
        </main>
        <div className="w-[9px] shrink-0 border-l-2 border-[#c4d4e0] bg-linear-to-b from-[#1f6f9c] to-[#2e90c8] border-r border-r-[#0c2238]" />
      </div>
      <div className="h-1 shrink-0 bg-linear-to-r from-[#5fb8e8] via-[#1c3c90] to-[#8ad0f0]" />
    </div>
  );
}
